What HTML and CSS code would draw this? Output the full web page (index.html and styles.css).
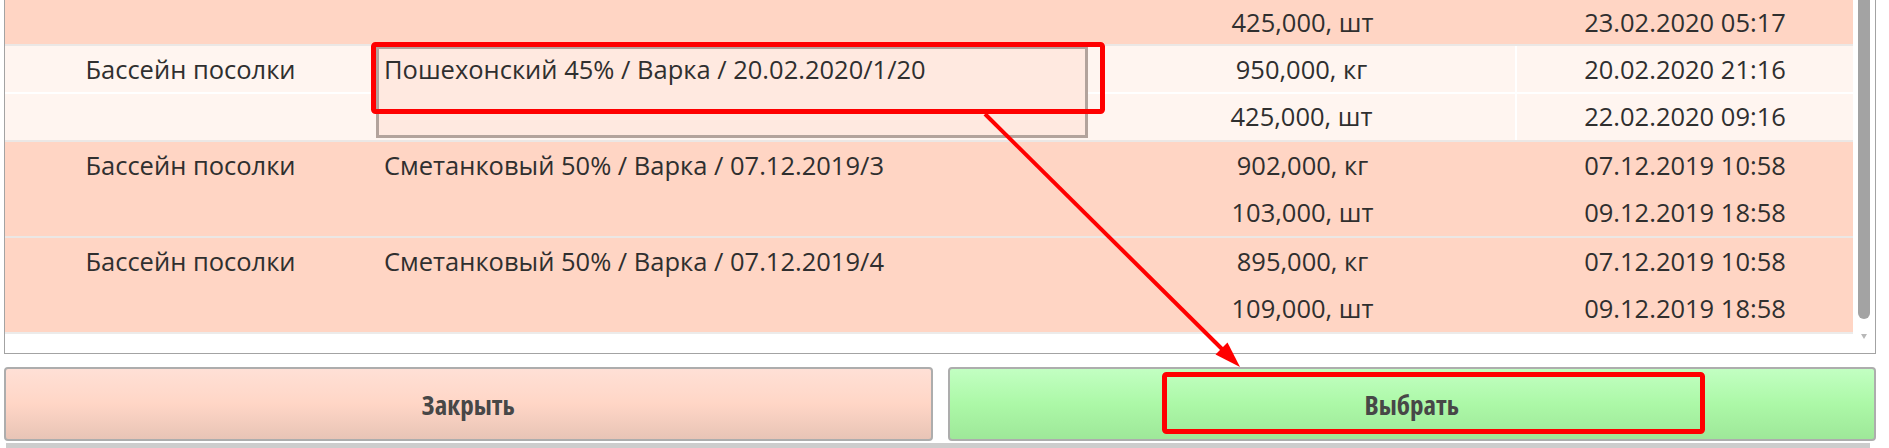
FILE: index.html
```html
<!DOCTYPE html>
<html lang="ru">
<head>
<meta charset="utf-8">
<title>Выбор партии</title>
<link rel="stylesheet" href="styles.css">
</head>
<body>
<div class="page">
  <div class="table-box">
    <div class="rows">
      <div class="group peach partial">
        <div class="cell c-qty">425,000, шт</div>
        <div class="cell c-date">23.02.2020 05:17</div>
      </div>
      <div class="group light">
        <div class="cell c-name">Бассейн посолки</div>
        <div class="cell c-batch selected">Пошехонский 45% / Варка / 20.02.2020/1/20</div>
        <div class="cell c-qty first">950,000, кг</div>
        <div class="cell c-date first">20.02.2020 21:16</div>
        <div class="cell c-qty">425,000, шт</div>
        <div class="cell c-date">22.02.2020 09:16</div>
      </div>
      <div class="group peach">
        <div class="cell c-name">Бассейн посолки</div>
        <div class="cell c-batch">Сметанковый 50% / Варка / 07.12.2019/3</div>
        <div class="cell c-qty first">902,000, кг</div>
        <div class="cell c-date first">07.12.2019 10:58</div>
        <div class="cell c-qty">103,000, шт</div>
        <div class="cell c-date">09.12.2019 18:58</div>
      </div>
      <div class="group peach">
        <div class="cell c-name">Бассейн посолки</div>
        <div class="cell c-batch">Сметанковый 50% / Варка / 07.12.2019/4</div>
        <div class="cell c-qty first">895,000, кг</div>
        <div class="cell c-date first">07.12.2019 10:58</div>
        <div class="cell c-qty">109,000, шт</div>
        <div class="cell c-date">09.12.2019 18:58</div>
      </div>
    </div>
    <div class="vscroll">
      <div class="thumb"></div>
      <div class="arrow"></div>
    </div>
  </div>
  <div class="buttons">
    <button class="btn btn-close">Закрыть</button>
    <button class="btn btn-select">Выбрать</button>
  </div>
  <div class="hscroll"></div>
</div>
<svg class="annot" width="1889" height="448" viewBox="0 0 1889 448">
  <rect x="373.5" y="44.5" width="729" height="67" rx="2" fill="none" stroke="#ff0000" stroke-width="5"/>
  <line x1="985" y1="114" x2="1222" y2="349" stroke="#ff0000" stroke-width="4"/>
  <polygon points="1240,367 1215.5,354.5 1227.5,342.5" fill="#ff0000"/>
  <rect x="1164.5" y="374.5" width="538" height="57" rx="2" fill="none" stroke="#ff0000" stroke-width="5"/>
</svg>
</body>
</html>
```
FILE: styles.css
```css
* { box-sizing: border-box; }
html, body { margin: 0; padding: 0; background: #fff; }
body {
  font-family: "Open Sans", "Noto Sans", sans-serif;
  color: #2f2f2f;
  width: 1889px;
  height: 448px;
  overflow: hidden;
  position: relative;
}
.page { padding-left: 4px; width: 1880px; }

.table-box {
  display: flex;
  width: 1872px;
  height: 354px;
  border: 1px solid #a3a3a3;
  border-top: 0;
  background: #fff;
}
.rows { width: 1848px; flex: none; }

.group {
  display: grid;
  grid-template-columns: 371px 712px 429px 336px;
  grid-template-rows: 47px 47px;
  border-top: 2px solid #ebe7e5;
}
.group.peach { background: #ffd5c4; }
.group.light {
  background: linear-gradient(#fff5f0 0 46px, #ffffff 46px 48px, #fff5f0 48px);
}
.group.partial { grid-template-rows: 44px; border-top: 0; }
.group:last-child { border-bottom: 2px solid #ecebea; }

.cell {
  font-size: 25.5px;
  line-height: 47px;
  white-space: nowrap;
  overflow: hidden;
}
.partial .cell { line-height: 44px; }
.c-name { grid-row: span 2; text-align: center; }
.c-batch { grid-row: span 2; padding-left: 8px; }
.c-qty { grid-column: 3; text-align: center; }
.c-date { grid-column: 4; text-align: center; }

.light .c-qty { border-right: 2px solid #fff; }

.c-batch.selected {
  background: #ffe9e0;
  box-shadow: inset 0 0 0 3px #b3a39c;
  margin-bottom: 2px;
}

.vscroll {
  width: 22px;
  display: flex;
  flex-direction: column;
  align-items: center;
}
.thumb {
  width: 12px;
  height: 319px;
  background: #a3a3a3;
  border-radius: 0 0 6px 6px;
}
.arrow {
  margin-top: 15px;
  width: 0;
  height: 0;
  border-left: 3px solid transparent;
  border-right: 3px solid transparent;
  border-top: 5px solid #b8b8b8;
}

.buttons {
  display: flex;
  gap: 15px;
  width: 1872px;
  margin-top: 13px;
}
.btn {
  flex: 1;
  height: 74px;
  border: 2px solid #adadad;
  border-radius: 4px;
  font-family: "Open Sans", "DejaVu Sans Condensed", sans-serif;
  font-weight: 700;
  font-stretch: 75%;
  font-size: 27px;
  color: #474747;
  padding: 0;
}
.btn-close { background: linear-gradient(#ffe0d6, #ffd6c6 50%, #e8c4b6); }
.btn-select { background: linear-gradient(#c2ffc2, #acf8a7 50%, #9ee899); }

.hscroll {
  margin-top: 2px;
  margin-left: 2px;
  width: 1864px;
  height: 8px;
  background: #cdcdcd;
}

.annot {
  position: absolute;
  left: 0;
  top: 0;
  pointer-events: none;
}
```
